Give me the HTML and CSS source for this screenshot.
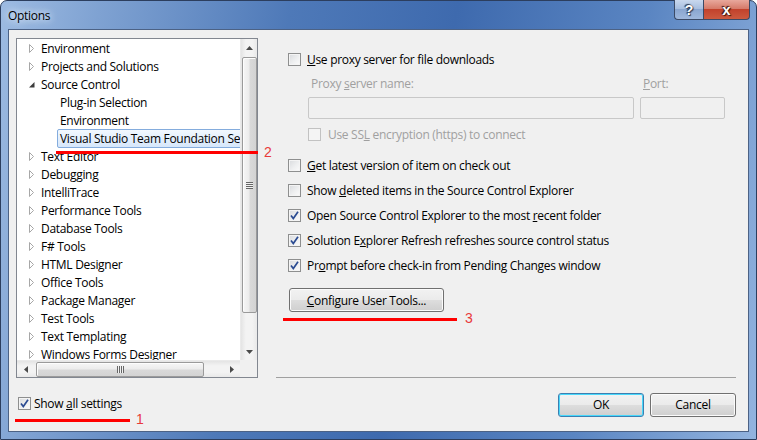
FILE: index.html
```html
<!DOCTYPE html>
<html>
<head>
<meta charset="utf-8">
<link rel="stylesheet" href="styles.css">
</head>
<body>
<div class="window">
  <div class="titlebar">
    <span class="title">Options</span>
    <div class="caps">
      <div class="cap help">?</div>
      <div class="cap close">x</div>
    </div>
  </div>
  <div class="client">
    <div class="main">
      <div class="tree">
        <div class="items">
          <div class="row"><span class="exp"><svg width="6" height="9" viewBox="0 0 6 9"><path d="M0.5 0.5 L4.5 4.5 L0.5 8.5 Z" fill="#fff" stroke="#a7a7a7"/></svg></span>Environment</div>
          <div class="row"><span class="exp"><svg width="6" height="9" viewBox="0 0 6 9"><path d="M0.5 0.5 L4.5 4.5 L0.5 8.5 Z" fill="#fff" stroke="#a7a7a7"/></svg></span>Projects and Solutions</div>
          <div class="row"><span class="exp"><svg width="6" height="9" viewBox="0 0 6 9"><path d="M5.5 2 L5.5 7.5 L0 7.5 Z" fill="#3c3c3c"/></svg></span>Source Control</div>
          <div class="row child">Plug-in Selection</div>
          <div class="row child">Environment</div>
          <div class="row child sel"><span class="selbox">Visual Studio Team Foundation Server</span></div>
          <div class="row"><span class="exp"><svg width="6" height="9" viewBox="0 0 6 9"><path d="M0.5 0.5 L4.5 4.5 L0.5 8.5 Z" fill="#fff" stroke="#a7a7a7"/></svg></span>Text Editor</div>
          <div class="row"><span class="exp"><svg width="6" height="9" viewBox="0 0 6 9"><path d="M0.5 0.5 L4.5 4.5 L0.5 8.5 Z" fill="#fff" stroke="#a7a7a7"/></svg></span>Debugging</div>
          <div class="row"><span class="exp"><svg width="6" height="9" viewBox="0 0 6 9"><path d="M0.5 0.5 L4.5 4.5 L0.5 8.5 Z" fill="#fff" stroke="#a7a7a7"/></svg></span>IntelliTrace</div>
          <div class="row"><span class="exp"><svg width="6" height="9" viewBox="0 0 6 9"><path d="M0.5 0.5 L4.5 4.5 L0.5 8.5 Z" fill="#fff" stroke="#a7a7a7"/></svg></span>Performance Tools</div>
          <div class="row"><span class="exp"><svg width="6" height="9" viewBox="0 0 6 9"><path d="M0.5 0.5 L4.5 4.5 L0.5 8.5 Z" fill="#fff" stroke="#a7a7a7"/></svg></span>Database Tools</div>
          <div class="row"><span class="exp"><svg width="6" height="9" viewBox="0 0 6 9"><path d="M0.5 0.5 L4.5 4.5 L0.5 8.5 Z" fill="#fff" stroke="#a7a7a7"/></svg></span>F# Tools</div>
          <div class="row"><span class="exp"><svg width="6" height="9" viewBox="0 0 6 9"><path d="M0.5 0.5 L4.5 4.5 L0.5 8.5 Z" fill="#fff" stroke="#a7a7a7"/></svg></span>HTML Designer</div>
          <div class="row"><span class="exp"><svg width="6" height="9" viewBox="0 0 6 9"><path d="M0.5 0.5 L4.5 4.5 L0.5 8.5 Z" fill="#fff" stroke="#a7a7a7"/></svg></span>Office Tools</div>
          <div class="row"><span class="exp"><svg width="6" height="9" viewBox="0 0 6 9"><path d="M0.5 0.5 L4.5 4.5 L0.5 8.5 Z" fill="#fff" stroke="#a7a7a7"/></svg></span>Package Manager</div>
          <div class="row"><span class="exp"><svg width="6" height="9" viewBox="0 0 6 9"><path d="M0.5 0.5 L4.5 4.5 L0.5 8.5 Z" fill="#fff" stroke="#a7a7a7"/></svg></span>Test Tools</div>
          <div class="row"><span class="exp"><svg width="6" height="9" viewBox="0 0 6 9"><path d="M0.5 0.5 L4.5 4.5 L0.5 8.5 Z" fill="#fff" stroke="#a7a7a7"/></svg></span>Text Templating</div>
          <div class="row"><span class="exp"><svg width="6" height="9" viewBox="0 0 6 9"><path d="M0.5 0.5 L4.5 4.5 L0.5 8.5 Z" fill="#fff" stroke="#a7a7a7"/></svg></span>Windows Forms Designer</div>
        </div>
        <div class="vscroll">
          <div class="sbtn"><svg width="7" height="4" viewBox="0 0 7 4"><path d="M0 4 L3.5 0 L7 4 Z" fill="#4a4a4a"/></svg></div>
          <div class="vtrack">
            <div class="vthumb"><span class="grip-v"></span></div>
          </div>
          <div class="sbtn"><svg width="7" height="4" viewBox="0 0 7 4"><path d="M0 0 L7 0 L3.5 4 Z" fill="#4a4a4a"/></svg></div>
        </div>
        <div class="hscroll">
          <div class="sbtn"><svg width="4" height="7" viewBox="0 0 4 7"><path d="M4 0 L4 7 L0 3.5 Z" fill="#4a4a4a"/></svg></div>
          <div class="htrack">
            <div class="hthumb"><span class="grip-h"></span></div>
          </div>
          <div class="sbtn"><svg width="4" height="7" viewBox="0 0 4 7"><path d="M0 0 L4 3.5 L0 7 Z" fill="#4a4a4a"/></svg></div>
        </div>
        <div class="corner"></div>
      </div>
      <div class="pane">
        <label class="opt">
          <span class="cb"></span>
          <span><u>U</u>se proxy server for file downloads</span>
        </label>
        <div class="proxy">
          <div class="labels">
            <span class="dis lab-name">Proxy <u>s</u>erver name:</span>
            <span class="dis lab-port"><u>P</u>ort:</span>
          </div>
          <div class="inputs">
            <span class="field name"></span>
            <span class="field port"></span>
          </div>
          <label class="opt ssl">
            <span class="cb disabled"></span>
            <span class="dis">Use SS<u>L</u> encryption (https) to connect</span>
          </label>
        </div>
        <div class="checks">
          <label class="opt"><span class="cb"></span><span><u>G</u>et latest version of item on check out</span></label>
          <label class="opt"><span class="cb"></span><span>Show <u>d</u>eleted items in the Source Control Explorer</span></label>
          <label class="opt"><span class="cb on"><svg width="11" height="11" viewBox="0 0 11 11"><path d="M2 5.5 L4.3 8.5 L9 1.8" fill="none" stroke="#2b4b92" stroke-width="1.7"/></svg></span><span>Open Source Control Explorer to the most <u>r</u>ecent folder</span></label>
          <label class="opt"><span class="cb on"><svg width="11" height="11" viewBox="0 0 11 11"><path d="M2 5.5 L4.3 8.5 L9 1.8" fill="none" stroke="#2b4b92" stroke-width="1.7"/></svg></span><span>Solution E<u>x</u>plorer Refresh refreshes source control status</span></label>
          <label class="opt"><span class="cb on"><svg width="11" height="11" viewBox="0 0 11 11"><path d="M2 5.5 L4.3 8.5 L9 1.8" fill="none" stroke="#2b4b92" stroke-width="1.7"/></svg></span><span>Pr<u>o</u>mpt before check-in from Pending Changes window</span></label>
        </div>
        <button class="btn tools"><u>C</u>onfigure User Tools...</button>
      </div>
    </div>
    <div class="footer">
      <label class="opt showall"><span class="cb on"><svg width="11" height="11" viewBox="0 0 11 11"><path d="M2 5.5 L4.3 8.5 L9 1.8" fill="none" stroke="#2b4b92" stroke-width="1.7"/></svg></span><span>Show <u>a</u>ll settings</span></label>
      <div class="actions">
        <button class="btn ok">OK</button>
        <button class="btn">Cancel</button>
      </div>
    </div>
  </div>

  <div class="mark m1"></div><span class="num n1">1</span>
  <div class="mark m2"></div><span class="num n2">2</span>
  <div class="mark m3"></div><span class="num n3">3</span>
</div>
</body>
</html>
```

FILE: styles.css
```css
* { box-sizing: border-box; }
html, body { margin: 0; padding: 0; }
body {
  width: 757px;
  height: 440px;
  overflow: hidden;
  font-family: "Segoe UI", "Open Sans", sans-serif;
  font-size: 12px;
  letter-spacing: -0.3px;
  color: #000;
  background: #fff;
}
u { text-decoration: underline; text-underline-offset: 1px; }

.window {
  position: relative;
  width: 757px;
  height: 440px;
  border: 1px solid #2c3e5e;
  border-radius: 7px 7px 0 0;
  background: linear-gradient(100deg, #9dbbe2 0%, #7fa2d2 12%, #4e79b8 35%, #3e6aae 55%, #5a85c2 78%, #93b4df 100%);
  padding: 0 7px 7px 7px;
  display: flex;
  flex-direction: column;
}
.titlebar {
  height: 28px;
  display: flex;
  align-items: flex-start;
  flex: none;
}
.title {
  margin-top: 6px;
  margin-left: 0;
  font-size: 12px;
  color: #000;
  text-shadow: 0 0 6px #e8f0fb, 0 0 10px #dbe7f7;
}
.caps {
  margin-left: auto;
  margin-right: -1px;
  margin-top: -1px;
  display: flex;
}
.cap {
  height: 20px;
  display: flex;
  align-items: center;
  justify-content: center;
  color: #fff;
  font-family: "Liberation Sans", sans-serif;
  font-weight: bold;
  letter-spacing: 0;
  border: 1px solid #3b4a66;
  border-top: none;
}
.help {
  width: 29px;
  border-right: none;
  border-radius: 0 0 0 4px;
  background: linear-gradient(#c9d8ee 0%, #a8bfe0 45%, #8aa6d0 50%, #9fb8dd 100%);
  font-size: 14px;
  text-shadow: 0 0 1px #2c3b55, 1px 1px 1px #2c3b55, -1px -1px 1px #2c3b55;
}
.close {
  width: 47px;
  border-radius: 0 0 4px 0;
  background: linear-gradient(#e8a89c 0%, #d67b6a 45%, #c2422c 50%, #cc5a3f 100%);
  font-size: 15px;
  text-shadow: 0 0 1px #3c1610, 1px 1px 1px #3c1610, -1px -1px 1px #3c1610;
}

.client {
  flex: 1;
  background: #f0f0f0;
  border: 1px solid #4c6285;
  display: flex;
  flex-direction: column;
  padding: 8px 0 0 7px;
}
.main {
  display: flex;
  gap: 18px;
  height: 340px;
  flex: none;
}

/* Tree */
.tree {
  width: 242px;
  height: 340px;
  border: 1px solid #828790;
  background: #fff;
  display: grid;
  grid-template-columns: 223px 17px;
  grid-template-rows: 321px 17px;
}
.items {
  overflow: hidden;
  white-space: nowrap;
}
.row {
  height: 18px;
  display: flex;
  align-items: center;
  padding-left: 12px;
}
.exp {
  width: 12px;
  display: flex;
  align-items: center;
  flex: none;
}
.exp svg { display: block; }
.row.child { padding-left: 43px; }
.row.sel { padding-left: 40px; }
.selbox {
  height: 19px;
  margin-top: 1px;
  display: flex;
  align-items: center;
  padding: 0 3px 0 2px;
  border: 1px solid #84acdd;
  border-radius: 2px;
  background: linear-gradient(#f2f8fe, #d6e7fb);
}

.vscroll {
  display: flex;
  flex-direction: column;
  background: linear-gradient(to right, #e4e4e4, #f3f3f3 30%, #f3f3f3 70%, #e9e9e9);
  border-left: 1px solid #eaeaea;
}
.sbtn {
  width: 17px;
  height: 17px;
  flex: none;
  display: flex;
  align-items: center;
  justify-content: center;
}
.sbtn svg { display: block; }
.vtrack { flex: 1; padding: 1px 0 0 0; }
.vthumb {
  margin: 0 auto;
  width: 15px;
  height: 256px;
  border: 1px solid #9a9a9a;
  border-radius: 2px;
  background: linear-gradient(to right, #f6f6f6, #ececec 45%, #d9d9d9 55%, #d3d3d3);
  box-shadow: inset 1px 1px 0 #fdfdfd;
  display: flex;
  align-items: center;
  justify-content: center;
}
.grip-v {
  width: 7px;
  height: 7px;
  background: repeating-linear-gradient(#666 0, #666 1px, #f2f2f2 1px, #f2f2f2 2px);
}
.hscroll {
  display: flex;
  background: linear-gradient(#e4e4e4, #f3f3f3 30%, #f3f3f3 70%, #e9e9e9);
  border-top: 1px solid #eaeaea;
}
.htrack { flex: 1; padding: 0 0 0 2px; display: flex; align-items: center; }
.hthumb {
  width: 168px;
  height: 15px;
  border: 1px solid #9a9a9a;
  border-radius: 2px;
  background: linear-gradient(#f6f6f6, #ececec 45%, #d9d9d9 55%, #d3d3d3);
  box-shadow: inset 1px 1px 0 #fdfdfd;
  display: flex;
  align-items: center;
  justify-content: center;
}
.grip-h {
  width: 7px;
  height: 7px;
  background: repeating-linear-gradient(to right, #666 0, #666 1px, #f2f2f2 1px, #f2f2f2 2px);
}
.corner { background: #f0f0f0; }

/* Right pane */
.pane {
  width: 460px;
  height: 340px;
  border-bottom: 1px solid #a0a0a0;
  padding: 12px 0 0 12px;
  display: flex;
  flex-direction: column;
  align-items: flex-start;
}
.opt {
  height: 18px;
  display: flex;
  align-items: center;
  gap: 6px;
  white-space: nowrap;
}
.cb {
  width: 13px;
  height: 13px;
  flex: none;
  border: 1px solid #8e8f8f;
  background: linear-gradient(135deg, #d8dadd 0%, #eeeff0 55%, #fbfbfb 100%);
  box-shadow: inset 0 0 0 1px #f4f4f4;
  display: flex;
  align-items: center;
  justify-content: center;
}
.cb svg { display: block; }
.cb.disabled {
  border-color: #c2c2c2;
  background: #f4f4f4;
}
.dis { color: #a0a0a0; }
.proxy {
  margin-left: 20px;
  display: flex;
  flex-direction: column;
  align-items: flex-start;
}
.labels {
  margin-top: 6px;
  height: 18px;
  display: flex;
  align-items: center;
  width: 416px;
}
.lab-name { margin-left: 3px; width: 332px; }
.inputs {
  margin-top: 5px;
  display: flex;
  gap: 6px;
}
.field {
  height: 22px;
  border: 1px solid #c8c8c8;
  border-radius: 2px;
  background: #f0f0f0;
}
.field.name { width: 326px; }
.field.port { width: 85px; }
.opt.ssl { margin-top: 6px; gap: 7px; }
.checks {
  margin-top: 13px;
  display: flex;
  flex-direction: column;
  gap: 7px;
}
.btn {
  font-family: inherit;
  font-size: 12px;
  letter-spacing: -0.3px;
  color: #000;
  height: 24px;
  border: 1px solid #707070;
  border-radius: 3px;
  background: linear-gradient(#f2f2f2 0%, #ebebeb 48%, #dddddd 52%, #cfcfcf 100%);
  box-shadow: inset 0 0 0 1px #fbfbfb;
  padding: 0;
  display: flex;
  align-items: center;
  justify-content: center;
}
.tools {
  margin-top: 14px;
  margin-left: 1px;
  width: 155px;
}

/* Footer */
.footer {
  display: flex;
  align-items: center;
  height: 23px;
  margin-top: 15px;
  padding-left: 2px;
  padding-right: 12px;
}
.showall { gap: 3px; margin-top: -2px; }
.actions {
  margin-left: auto;
  display: flex;
  gap: 6px;
}
.actions .btn { width: 86px; }
.btn.ok {
  border-color: #3c7fb1;
  box-shadow: inset 0 0 0 1px #48d8fb;
}

/* Annotations */
.mark {
  position: absolute;
  height: 3px;
  background: #f00;
}
.m1 { left: 14px; top: 418px; width: 115px; }
.m2 { left: 55px; top: 150px; width: 202px; }
.m3 { left: 282px; top: 317px; width: 174px; }
.num {
  position: absolute;
  font-family: "Liberation Sans", sans-serif;
  font-size: 14px;
  line-height: 14px;
  letter-spacing: 0;
  color: #e83a3a;
}
.n1 { left: 135px; top: 411px; }
.n2 { left: 263px; top: 144px; }
.n3 { left: 464px; top: 310px; }
```
